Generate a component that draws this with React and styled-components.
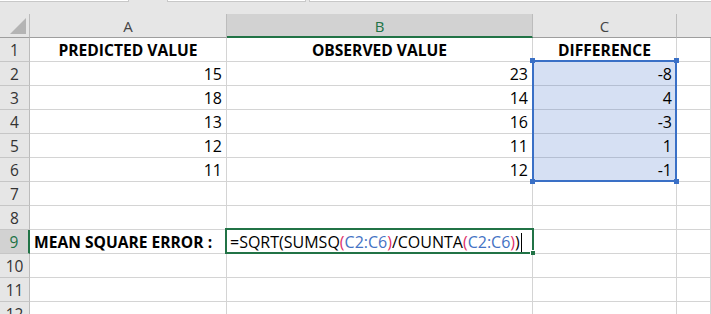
import React from "react";
import styled, { createGlobalStyle, css } from "styled-components";

const Global = createGlobalStyle`
  html, body { margin: 0; padding: 0; background: #fff; }
  body { font-family: "Open Sans", "Liberation Sans", sans-serif; overflow: hidden; }
`;

const FONT = `"Open Sans", "Liberation Sans", sans-serif`;
const GREEN = "#217346";
const BLUE = "#3a70c6";

const Page = styled.div`
  width: 711px;
  height: 314px;
  background: #e6e6e6;
  position: relative;
  overflow: hidden;
`;

const TopStrip = styled.div`
  display: flex;
  height: 14px;
  align-items: flex-start;
`;

const TopBox = styled.div`
  height: 1px;
  background: #fff;
  border-bottom: 1px solid #c8c8c8;
  border-right: ${(p) => (p.$edge ? "1px solid #c8c8c8" : "none")};
  border-left: ${(p) => (p.$ledge ? "1px solid #c8c8c8" : "none")};
  width: ${(p) => (p.$w ? `${p.$w}px` : "auto")};
  flex: ${(p) => (p.$w ? "none" : "1")};
`;

const TopGap = styled.div`
  width: ${(p) => p.$w}px;
`;

const Grid = styled.div`
  display: grid;
  grid-template-columns: 30px 197px 306px 144px 1fr;
  grid-auto-rows: 24px;
  background: #fff;
`;

const HeaderCell = styled.div`
  box-sizing: border-box;
  background: ${(p) => (p.$active ? "#d2d2d2" : "#e6e6e6")};
  border-right: 1px solid #bcbcbc;
  border-bottom: ${(p) => (p.$active ? `2px solid ${GREEN}` : "1px solid #9e9e9e")};
  color: ${(p) => (p.$active ? GREEN : "#444")};
  font-family: ${FONT};
  font-size: 15px;
  display: flex;
  align-items: center;
  justify-content: center;
  padding-top: 1px;
  ${(p) => p.$last && css`border-right: none;`}
`;

const Corner = styled.div`
  box-sizing: border-box;
  background: #e6e6e6;
  border-right: 1px solid #bcbcbc;
  border-bottom: 1px solid #9e9e9e;
  display: flex;
  align-items: flex-end;
  justify-content: flex-end;
  padding: 0 3px 3px 0;
`;

const RowHead = styled.div`
  box-sizing: border-box;
  background: ${(p) => (p.$active ? "#d2d2d2" : "#e6e6e6")};
  border-right: ${(p) => (p.$active ? `2px solid ${GREEN}` : "1px solid #bcbcbc")};
  border-bottom: 1px solid #c6c6c6;
  color: ${(p) => (p.$active ? GREEN : "#333")};
  font-family: ${FONT};
  font-size: 15.5px;
  display: flex;
  align-items: flex-end;
  justify-content: center;
  padding-bottom: 1px;
  line-height: 20px;
`;

const Cell = styled.div`
  box-sizing: border-box;
  border-right: 1px solid ${(p) => (p.$sel ? "#b5bfd2" : "#d4d4d4")};
  border-bottom: 1px solid ${(p) => (p.$sel ? "#b5bfd2" : "#d4d4d4")};
  background: ${(p) => (p.$sel ? "#d6e0f3" : "#fff")};
  font-family: ${FONT};
  font-size: ${(p) => (p.$bold ? "15.6px" : "16px")};
  font-weight: ${(p) => (p.$bold ? 700 : 400)};
  color: #000;
  display: flex;
  align-items: flex-end;
  justify-content: ${(p) =>
    p.$align === "center" ? "center" : p.$align === "left" ? "flex-start" : "flex-end"};
  padding: 0 4px 1px 4px;
  line-height: 20px;
  white-space: nowrap;
  overflow: visible;
`;

const Selection = styled.div`
  position: absolute;
  left: 532px;
  top: 60px;
  width: 145px;
  height: 122px;
  box-sizing: border-box;
  border: 2px solid ${BLUE};
  pointer-events: none;
`;

const Handle = styled.div`
  position: absolute;
  width: 5px;
  height: 5px;
  background: ${BLUE};
  ${(p) => (p.$top ? "top: -4px;" : "bottom: -4px;")}
  ${(p) => (p.$left ? "left: -4px;" : "right: -4px;")}
`;

const EditBox = styled.div`
  position: absolute;
  left: 225px;
  top: 228px;
  width: 309px;
  height: 26px;
  box-sizing: border-box;
  border: 2px solid ${GREEN};
  background: #fff;
  font-family: ${FONT};
  font-size: 16px;
  line-height: 20px;
  padding: 2px 0 0 3px;
  white-space: nowrap;
  display: flex;
  align-items: flex-end;
`;

const EditHandle = styled.div`
  position: absolute;
  right: -3px;
  bottom: -3px;
  width: 4px;
  height: 4px;
  background: ${GREEN};
  border-left: 1px solid #fff;
  border-top: 1px solid #fff;
`;

const Tok = styled.span`
  color: ${(p) => (p.$c === "ref" ? "#4472c4" : p.$c === "par" ? "#e0306a" : "#000")};
`;

const Caret = styled.span`
  display: inline-block;
  width: 1px;
  height: 19px;
  background: #000;
  margin-left: 1px;
`;

const data = [
  ["PREDICTED VALUE", "OBSERVED VALUE", "DIFFERENCE"],
  ["15", "23", "-8"],
  ["18", "14", "4"],
  ["13", "16", "-3"],
  ["12", "11", "1"],
  ["11", "12", "-1"],
];

export default function App() {
  const rows = [];
  for (let r = 1; r <= 12; r++) {
    const d = data[r - 1];
    rows.push(<RowHead key={`h${r}`} $active={r === 9}>{r}</RowHead>);
    if (r === 1) {
      rows.push(
        <Cell key="a1" $bold $align="center">{d[0]}</Cell>,
        <Cell key="b1" $bold $align="center">{d[1]}</Cell>,
        <Cell key="c1" $bold $align="center">{d[2]}</Cell>
      );
    } else if (d) {
      rows.push(
        <Cell key={`a${r}`}>{d[0]}</Cell>,
        <Cell key={`b${r}`}>{d[1]}</Cell>,
        <Cell key={`c${r}`} $sel>{d[2]}</Cell>
      );
    } else if (r === 9) {
      rows.push(
        <Cell key="a9" $bold $align="left">MEAN SQUARE ERROR :</Cell>,
        <Cell key="b9" />,
        <Cell key="c9" />
      );
    } else {
      rows.push(<Cell key={`a${r}`} />, <Cell key={`b${r}`} />, <Cell key={`c${r}`} />);
    }
    rows.push(<Cell key={`d${r}`} />);
  }

  return (
    <Page>
      <Global />
      <TopStrip>
        <TopBox $w={128} $edge />
        <TopGap $w={38} />
        <TopBox $w={137} $edge $ledge />
        <TopGap $w={3} />
        <TopBox $ledge />
      </TopStrip>
      <Grid>
        <Corner>
          <svg width="16" height="16" viewBox="0 0 16 16">
            <polygon points="16,0 16,16 0,16" fill="#b4b4b4" />
          </svg>
        </Corner>
        <HeaderCell>A</HeaderCell>
        <HeaderCell $active>B</HeaderCell>
        <HeaderCell>C</HeaderCell>
        <HeaderCell $last />
        {rows}
      </Grid>
      <Selection>
        <Handle $top $left />
        <Handle $top />
        <Handle $left />
        <Handle />
      </Selection>
      <EditBox>
        <Tok>=SQRT(SUMSQ</Tok>
        <Tok $c="par">(</Tok>
        <Tok $c="ref">C2:C6</Tok>
        <Tok $c="par">)</Tok>
        <Tok>/COUNTA</Tok>
        <Tok $c="par">(</Tok>
        <Tok $c="ref">C2:C6</Tok>
        <Tok $c="par">)</Tok>
        <Tok>)</Tok>
        <Caret />
        <EditHandle />
      </EditBox>
    </Page>
  );
}
